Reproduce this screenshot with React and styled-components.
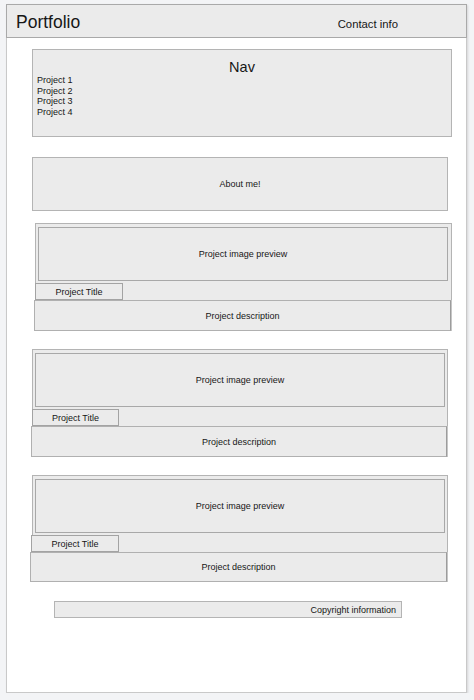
import React from "react";
import styled, { createGlobalStyle } from "styled-components";

const Global = createGlobalStyle`
  * { box-sizing: border-box; }
  html, body { margin: 0; padding: 0; }
  body {
    background: #f3f4f6;
    font-family: "Liberation Sans", Arial, sans-serif;
    color: #161616;
  }
`;

const Frame = styled.div`
  margin: 4px 0 0 6px;
  width: 461px;
  height: 689px;
  background: #ffffff;
  border: 1px solid #c9c9c9;
  box-shadow: 1px 1px 2px rgba(0, 0, 0, 0.12);
  display: flex;
  flex-direction: column;
  align-items: flex-start;
`;

const Header = styled.header`
  margin: -1px -1px 0;
  align-self: stretch;
  height: 34px;
  background: #ebebeb;
  border: 1px solid #a9a9a9;
  display: flex;
  align-items: baseline;
  padding: 7px 68px 0 9px;
`;

const Logo = styled.div`
  font-size: 17.5px;
  line-height: 20px;
`;

const Contact = styled.div`
  margin-left: auto;
  font-size: 11.3px;
  line-height: 14px;
`;

const Box = styled.div`
  background: #ebebeb;
  border: 1px solid #b4b4b4;
`;

const Nav = styled(Box)`
  margin: 11px 0 0 25px;
  width: 420px;
  height: 88px;
  padding: 9px 0 0 4px;
`;

const NavTitle = styled.div`
  font-size: 14.5px;
  line-height: 16px;
  text-align: center;
  padding-right: 4px;
`;

const NavList = styled.ul`
  list-style: none;
  margin: 0;
  padding: 0;
  font-size: 9px;
  line-height: 10.7px;
`;

const About = styled(Box)`
  margin: 20px 0 0 25px;
  width: 416px;
  height: 54px;
  display: flex;
  align-items: center;
  justify-content: center;
  font-size: 9px;
`;

const Card = styled(Box)`
  margin: ${(p) => p.$mt}px 0 0 ${(p) => p.$ml}px;
  width: ${(p) => p.$w}px;
  display: flex;
  flex-direction: column;
  align-items: flex-start;
  font-size: 9px;
`;

const Preview = styled(Box)`
  margin: 3px 0 0 2px;
  width: 410px;
  height: 54px;
  border-color: #a8a8a8;
  display: flex;
  align-items: center;
  justify-content: center;
`;

const Title = styled(Box)`
  margin: 2px 0 0 ${(p) => p.$ml}px;
  width: ${(p) => p.$w}px;
  height: 17px;
  border-color: #a3a3a3;
  display: flex;
  align-items: center;
  justify-content: center;
`;

const Description = styled(Box)`
  margin: 0 0 -1px ${(p) => p.$ml}px;
  width: ${(p) => p.$w}px;
  height: ${(p) => p.$h}px;
  border-color: #b0b0b0;
  border-right-color: #9c9c9c;
  box-shadow: 1px 0 0 #c6c6c6;
  display: flex;
  align-items: center;
  justify-content: center;
`;

const Copyright = styled(Box)`
  margin: 19px 0 0 47px;
  width: 348px;
  height: 17px;
  display: flex;
  align-items: center;
  justify-content: flex-end;
  padding-right: 5px;
  font-size: 9px;
`;

const cards = [
  { mt: 12, ml: 28, w: 417, titleMl: -1, titleW: 88, descMl: -2, descW: 417, descH: 31 },
  { mt: 18, ml: 25, w: 416, titleMl: -1, titleW: 87, descMl: -2, descW: 416, descH: 31 },
  { mt: 18, ml: 25, w: 416, titleMl: -2, titleW: 88, descMl: -3, descW: 417, descH: 30 },
];

export default function App() {
  return (
    <>
      <Global />
      <Frame>
        <Header>
          <Logo>Portfolio</Logo>
          <Contact>Contact info</Contact>
        </Header>
        <Nav>
          <NavTitle>Nav</NavTitle>
          <NavList>
            <li>Project 1</li>
            <li>Project 2</li>
            <li>Project 3</li>
            <li>Project 4</li>
          </NavList>
        </Nav>
        <About>About me!</About>
        {cards.map((c, i) => (
          <Card key={i} $mt={c.mt} $ml={c.ml} $w={c.w}>
            <Preview>Project image preview</Preview>
            <Title $ml={c.titleMl} $w={c.titleW}>Project Title</Title>
            <Description $ml={c.descMl} $w={c.descW} $h={c.descH}>
              Project description
            </Description>
          </Card>
        ))}
        <Copyright>Copyright information</Copyright>
      </Frame>
    </>
  );
}
